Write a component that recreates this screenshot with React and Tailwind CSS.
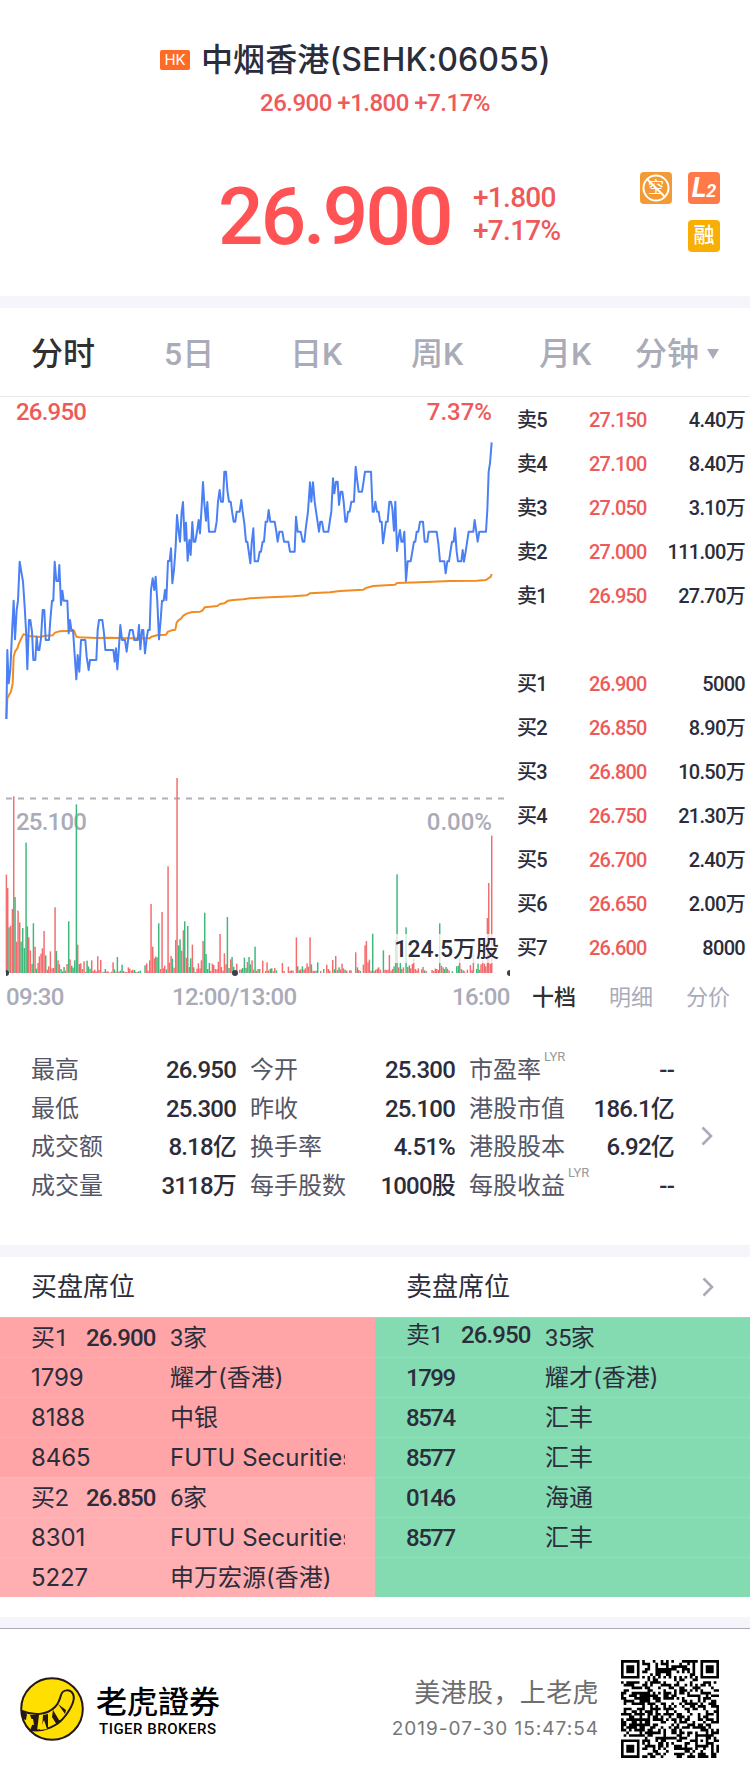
import clsx from 'clsx';

const tabs = [
    { label: '分时', pad: 'w-[164px] pl-[31px]' },
    { label: '5日', pad: 'w-[126px]' },
    { label: '日K', pad: 'w-[121px]' },
    { label: '周K', pad: 'w-[128px]' },
    { label: '月K', pad: 'w-[96px]' },
];

const asks = [
    ['卖5', '27.150', '4.40万'],
    ['卖4', '27.100', '8.40万'],
    ['卖3', '27.050', '3.10万'],
    ['卖2', '27.000', '111.00万'],
    ['卖1', '26.950', '27.70万'],
];

const bids = [
    ['买1', '26.900', '5000'],
    ['买2', '26.850', '8.90万'],
    ['买3', '26.800', '10.50万'],
    ['买4', '26.750', '21.30万'],
    ['买5', '26.700', '2.40万'],
    ['买6', '26.650', '2.00万'],
    ['买7', '26.600', '8000'],
];

const stats = [
    [['最高', '26.950'], ['最低', '25.300'], ['成交额', '8.18亿'], ['成交量', '3118万']],
    [['今开', '25.300'], ['昨收', '25.100'], ['换手率', '4.51%'], ['每手股数', '1000股']],
    [['市盈率', '--', 'LYR'], ['港股市值', '186.1亿'], ['港股股本', '6.92亿'], ['每股收益', '--', 'LYR']],
];

const buySeats = [
    { level: '买1', price: '26.900', count: '3家' },
    { code: '1799', name: '耀才(香港)' },
    { code: '8188', name: '中银' },
    { code: '8465', name: 'FUTU Securities' },
    { level: '买2', price: '26.850', count: '6家', light: true },
    { code: '8301', name: 'FUTU Securities', light: true },
    { code: '5227', name: '申万宏源(香港)', light: true },
];

const sellSeats = [
    { level: '卖1', price: '26.950', count: '35家' },
    { code: '1799', name: '耀才(香港)' },
    { code: '8574', name: '汇丰' },
    { code: '8577', name: '汇丰' },
    { code: '0146', name: '海通' },
    { code: '8577', name: '汇丰' },
    {},
];

// Chart series are kept at three units per pixel
const priceMorning =
    '19,957 22,750 26,850 31,810 36,700 41,602 45,718 50,630 54,602 59,485 63,510 69,545 74,620 78,690 82,808 87,660 91,660 96,695 100,780 106,780 110,710 114,750 118,750 123,715 128,630 133,630 137,720 147,720 151,660 156,602 160,602 164,485 169,543 175,543 178,495 183,615 187,572 191,602 202,602 206,700 210,660 214,690 219,690 224,765 229,838 233,765 238,815 243,720 256,720 260,770 266,810 270,780 289,780 293,690 297,660 307,660 312,700 316,750 340,750 344,785 348,745 352,808 357,740 361,675 366,720 375,720 380,755 385,715 390,690 398,690 403,720 413,720 417,675 421,748 426,690 430,690 435,760 440,715 444,690 449,690 453,570 458,535 463,570 467,530 472,605 477,718 482,660 486,602 491,602 495,570 499,600 504,483 509,483 513,445 517,550 522,510 527,440 531,345 536,395 540,425 545,335 549,306 554,422 558,368 563,482 568,420 572,465 577,366 581,425 586,425 591,395 596,360 600,400 605,320 609,246 613,310 618,362 622,306 627,395 645,395 650,365 654,305 659,270 663,305 669,305 673,215 678,215 682,270 687,305 692,305 697,340 701,365 706,365 710,335 719,335 724,300 728,335 733,370 738,425 742,425 747,460 751,490';
const priceAfternoon =
    '5,430 10,385 14,484 24,484 29,455 33,455 38,425 42,425 47,365 52,365 56,330 61,365 74,365 79,395 83,425 88,395 97,395 102,425 115,425 120,455 134,455 138,350 143,395 152,395 158,425 163,425 168,380 174,335 180,247 184,305 189,247 194,305 199,340 207,395 211,365 216,365 221,395 235,395 240,360 244,335 249,235 253,280 258,245 263,245 267,315 272,275 277,275 281,305 286,365 290,365 294,335 299,335 304,305 312,305 317,200 321,235 326,275 336,275 340,250 345,215 363,215 368,335 372,335 376,305 381,335 386,335 390,365 395,365 399,430 404,395 408,365 413,365 418,305 423,305 427,325 432,392 436,305 441,453 446,410 450,390 454,425 459,425 463,395 468,543 473,484 482,484 487,455 492,425 496,425 500,395 505,395 510,365 519,365 524,425 532,425 536,395 560,395 565,430 570,484 583,484 587,520 592,484 597,484 602,450 606,425 611,425 615,385 620,455 624,484 634,484 638,450 642,485 647,455 656,395 670,395 674,360 679,395 683,425 688,395 708,395 712,330 716,215 720,190 725,127';
const average =
    '19,957 22,895 27,885 33,875 38,850 41,770 45,755 52,745 57,730 64,715 70,703 77,704 85,708 125,711 130,708 158,706 165,698 178,694 222,692 229,710 237,712 290,714 330,713 380,715 448,715 455,710 470,706 498,704 504,695 515,691 526,689 530,668 535,661 543,656 550,647 560,641 577,636 600,635 607,632 614,622 630,620 652,618 660,612 673,610 684,602 700,600 730,598 750,595 779,593 810,592 880,589 920,586 930,580 990,577 1020,573 1090,569 1100,563 1120,558 1185,554 1191,549 1260,547 1350,543 1430,542 1458,540 1468,533 1472,531 1475,522';

const tail = priceAfternoon
    .split(' ')
    .map((p) => {
        const [x, y] = p.split(',').map(Number);
        return `${x + 750},${y}`;
    })
    .join(' ');
const price = `${priceMorning} ${tail}`;

// Volume: x, bar height, g = down tick / r = up tick
const volume =
    '19,295,r 23,255,r 27,137,g 32,142,r 37,192,r 41,530,r 45,228,g 50,94,r 54,187,r 59,152,r 63,94,g 68,135,g 73,75,g 78,391,g 82,140,g 86,107,r 91,68,r 96,27,g 100,149,g 105,79,r 109,13,g 114,30,r 118,50,r 123,58,r 127,74,r 132,126,r 137,53,g 142,10,r 146,20,r 151,65,r 156,14,r 161,15,r 165,197,r 169,66,g 174,38,r 178,26,r 183,12,g 188,5,g 192,18,g 196,7,r 201,27,r 206,155,g 210,41,r 215,22,g 219,16,g 224,38,g 229,506,g 233,85,r 238,27,g 242,29,r 247,12,r 252,35,r 257,3,r 261,37,g 265,20,g 270,13,g 275,38,r 279,6,r 284,10,r 288,5,r 293,50,r 297,9,r 302,39,r 307,2,g 312,4,r 316,12,g 321,5,r 325,4,r 334,4,r 339,32,r 343,11,g 348,4,r 352,48,g 357,4,r 361,7,g 366,25,g 370,6,r 375,4,r 380,3,r 385,17,r 389,13,r 394,7,r 398,10,r 403,9,g 407,4,r 412,3,r 416,5,g 421,7,g 435,23,g 440,29,r 444,7,r 449,38,r 453,207,r 458,79,r 463,44,r 467,49,r 471,47,g 476,149,g 481,12,r 486,183,r 490,14,r 494,22,r 499,11,g 504,320,r 508,31,r 513,51,r 517,43,g 522,16,r 527,99,r 531,585,r 536,83,g 540,101,g 545,67,r 550,128,r 554,155,g 559,46,r 563,141,g 568,18,r 572,44,g 577,85,r 581,17,g 586,3,g 591,13,r 595,29,r 600,14,r 604,38,r 609,96,r 614,181,g 618,57,g 623,12,g 628,30,g 632,6,r 637,28,r 641,24,r 646,12,r 651,11,r 655,34,r 660,117,r 664,18,r 669,7,r 673,59,r 678,26,r 682,168,g 687,15,g 692,41,r 696,48,g 701,19,g 705,4,r 710,28,r 719,10,r 724,11,r 728,15,g 733,46,g 738,15,g 742,33,r 747,48,g 751,26,g 756,38,r 760,10,r 765,79,g 769,7,r 774,12,g 779,12,r 788,37,r 797,6,r 801,32,r 806,8,r 811,13,g 815,14,g 820,5,r 824,15,r 829,8,g 847,30,r 852,6,r 865,19,r 870,6,r 874,8,r 879,7,r 889,107,r 893,20,g 898,8,g 902,11,r 907,20,g 912,10,r 916,14,r 921,29,r 925,19,r 930,107,r 934,26,g 939,7,r 943,6,r 948,7,g 953,32,g 962,6,r 971,12,g 980,25,r 985,12,r 989,7,r 998,39,r 1003,11,g 1007,51,r 1012,9,r 1017,17,g 1021,11,r 1026,28,r 1030,14,r 1035,10,g 1040,7,r 1049,8,r 1053,8,r 1067,62,r 1072,17,g 1076,9,r 1081,6,g 1090,25,r 1095,83,r 1099,96,r 1104,32,r 1108,40,r 1113,7,r 1118,118,g 1122,6,r 1127,10,r 1132,13,r 1136,17,r 1141,10,r 1150,68,g 1155,10,r 1159,9,r 1164,10,r 1168,54,r 1173,7,r 1178,12,r 1182,20,g 1187,99,r 1191,296,g 1196,17,r 1201,30,g 1205,12,r 1210,17,r 1218,137,g 1223,18,r 1228,23,g 1232,14,r 1237,27,r 1241,44,r 1246,12,r 1251,8,r 1255,14,r 1265,11,r 1269,18,r 1274,8,g 1279,5,r 1296,9,r 1301,6,r 1306,13,r 1310,12,r 1315,9,r 1319,149,g 1324,22,r 1329,17,r 1333,12,g 1338,18,g 1342,13,r 1347,8,r 1357,5,g 1370,20,g 1375,22,g 1379,44,r 1384,12,r 1389,8,g 1393,5,r 1402,10,r 1411,24,r 1416,8,r 1420,55,r 1430,12,g 1434,28,g 1439,10,r 1443,26,r 1448,38,r 1453,28,r 1457,20,r 1462,165,r 1466,270,r 1471,27,r 1475,412,r'
        .split(' ')
        .map((v) => v.split(','));

const Chart = () => (
    <div className="relative w-[510px] h-[583px] shrink-0">
        <svg viewBox="0 0 510 583" className="block w-[510px] h-[583px]">
            <path d="M6 401.5H507" stroke="#aeb0bc" strokeWidth="2" strokeDasharray="6 6" />
            <g transform="translate(0 3) scale(.33333)" fill="none" strokeWidth="6" strokeLinejoin="round">
                <polyline points={average} stroke="#f08c22" />
                <polyline points={price} stroke="#4b80f4" />
            </g>
        </svg>
        <ChartText className="left-4 top-[3px] tracking-[-0.8px] text-[#ee5a5a]">26.950</ChartText>
        <ChartText className="right-[18px] top-[3px] text-[#ee5a5a]">7.37%</ChartText>
        <ChartText className="left-4 top-[413px] tracking-[-0.8px] text-[#a9abb8]">25.100</ChartText>
        <ChartText className="right-[18px] top-[413px] text-[#a9abb8]">0.00%</ChartText>
        <svg viewBox="0 0 510 583" className="absolute inset-0 w-[510px] h-[583px]">
            <g transform="translate(0 576) scale(.33333)">
                {volume.map(([x, h, c], i) => (
                    <rect key={i} x={x - 2} y={-h} width="4.4" height={h} fill={c === 'g' ? '#3fb87a' : '#f36c6e'} />
                ))}
            </g>
            <path d="M6 573a3 3 0 0 1 0 6z" fill="#3d3e4a" />
            <circle cx="235" cy="576" r="3" fill="#3d3e4a" />
            <path d="M510 573a3 3 0 0 0 0 6z" fill="#3d3e4a" />
        </svg>
        <div className="absolute right-[11px] top-[537px] h-[29px] bg-white/75 text-[23px] leading-[32px] font-medium whitespace-nowrap">
            124.5万股
        </div>
    </div>
);

const ChartText = ({ className, children }) => (
    <div className={clsx('absolute text-2xl leading-6 font-medium', className)}>{children}</div>
);

const BookRow = ({ row: [label, value, amount] }) => (
    <div className="flex h-11 items-center text-[20px] font-medium text-[#2c2d3b]">
        <span className="w-[72px] tracking-[-0.8px]">{label}</span>
        <span className="text-[#ee5a5a] tracking-[-0.8px]">{value}</span>
        <span className="ml-auto tracking-[-0.7px]">{amount}</span>
    </div>
);

const Chevron = () => (
    <svg viewBox="0 0 12 20" className="w-3 h-5 shrink-0" fill="none" stroke="#a9abb8" strokeWidth="2.6">
        <path d="M1.5 1.5L10 10L1.5 18.5" />
    </svg>
);

const SeatRow = ({ seat, side }) => (
    <div
        className={clsx(
            'flex h-10 items-center border-t pl-[31px] text-2xl text-[#2c2d3b]',
            side === 'sell' && 'bg-[#84dbb1] border-[#93dfba]',
            side === 'buy' && !seat.light && 'bg-[#ffa5a8] border-[#ffadb0]',
            side === 'buy' && seat.light && 'bg-[#ffaeb1] border-[#ffb6b8]'
        )}
    >
        {seat.level && (
            <>
                <span className={clsx('flex w-[139px] font-medium', side === 'sell' && 'pb-[5px]')}>
                    <span className="w-[55px] font-normal">{seat.level}</span>
                    <span className="tracking-[-0.9px]">{seat.price}</span>
                </span>
                <span className="tracking-[-0.6px]">{seat.count}</span>
            </>
        )}
        {seat.code && (
            <>
                <span className={clsx('w-[139px]', side === 'sell' ? 'font-medium tracking-[-1.5px]' : "font-['Inter'] tracking-[-0.1px]")}>
                    {seat.code}
                </span>
                <span className="w-[175px] overflow-hidden whitespace-nowrap font-['Inter','Noto_Sans_CJK_SC',sans-serif]">
                    {seat.name}
                </span>
            </>
        )}
    </div>
);

const QR_SIZE = 37;

const isDark = (x, y) => {
    const far = QR_SIZE - 7;
    for (const [fx, fy] of [[0, 0], [far, 0], [0, far]]) {
        const d = Math.max(Math.abs(x - fx - 3), Math.abs(y - fy - 3));
        if (d <= 4) return d !== 4 && d !== 2;
    }
    const a = Math.max(Math.abs(x - 30), Math.abs(y - 30));
    if (a <= 2) return a !== 1;
    if (x === 6 || y === 6) return (x + y) % 2 === 0;
    const n = Math.sin(x * 12.9898 + y * 78.233) * 43758.5453;
    return n - Math.floor(n) < 0.53;
};

const QrCode = () => {
    let d = '';
    for (let y = 0; y < QR_SIZE; y++) {
        for (let x = 0; x < QR_SIZE; x++) {
            if (isDark(x, y)) d += `M${x} ${y}h1v1h-1z`;
        }
    }
    return (
        <svg viewBox="0 0 37 37" className="w-[98px] h-[98px]">
            <path d={d} />
        </svg>
    );
};

const TigerLogo = () => (
    <svg viewBox="0 0 64 64" className="w-16 h-16">
        <circle cx="32" cy="32" r="30.8" fill="#ffdf00" stroke="#231815" strokeWidth="2" />
        <path
            d="M2 34C14 39 27 38 35 30C39 26 40 22 41 18C43 12 50 12 53 17C56 23 51 31 46 38C38 49 25 55 11 53"
            fill="none"
            stroke="#231815"
            strokeWidth="2"
        />
        <path d="M1 33L7 37L6 43L3 42z M10 38L19 38L17 54L10 53L13 46z M23 38L28 37L28 52L22 53z M33 33L39 43L42 44L37 48L32 40z M38 27L46 33L45 37z" fill="#231815" />
        <path d="M24 43L27 52L20 53z M8 42L13 42L14 48L9 47z" fill="#ffdf00" />
    </svg>
);

export default function App() {
    return (
        <div className="w-[750px] h-[1789px] overflow-hidden bg-white text-[#2c2d3b] font-['Roboto','Noto_Sans_CJK_SC',sans-serif]">
            {/* Quote header */}
            <header className="h-[296px] pt-[38px]">
                <div className="flex items-center h-11 pl-[160px] gap-[11px]">
                    <span className="flex w-[30px] h-5 items-center justify-center rounded-[2px] bg-[#ff6a26] text-white font-['Inter'] text-[15px]">HK</span>
                    <h1 className="text-[32px] leading-[44px] font-medium whitespace-nowrap font-['Inter','Noto_Sans_CJK_SC',sans-serif] tracking-[0.1px]">
                        中烟香港(SEHK:06055)
                    </h1>
                </div>
                <p className="mt-[6px] pl-[260px] text-2xl leading-[30px] font-medium tracking-[-0.5px] text-[#ee5a5a] whitespace-nowrap">
                    26.900 +1.800 +7.17%
                </p>
                <div className="flex mt-[54px]">
                    <div className="pl-[218px] w-[473px] text-[80px] leading-[90px] font-medium tracking-[-2.8px] text-[#ff5254]">26.900</div>
                    <div className="w-[167px] pt-[9px] text-[28px] leading-[33px] font-medium tracking-[-0.7px] text-[#ee5a5a]">
                        <p>+1.800</p>
                        <p>+7.17%</p>
                    </div>
                    <div className="grid grid-cols-2 gap-4 w-20 h-20">
                        <span className="relative flex w-8 h-8 items-center justify-center rounded bg-[#f39a35] text-white text-base">
                            空
                            <svg viewBox="0 0 32 32" className="absolute inset-0" fill="none" stroke="#fff" strokeWidth="2">
                                <circle cx="16" cy="16" r="12.5" />
                                <path d="M7 7L25 25" />
                            </svg>
                        </span>
                        <span className="flex w-8 h-8 items-baseline justify-center rounded bg-[#ff7a48] text-white italic font-bold text-[28px] leading-8">
                            L<span className="text-[18px]">2</span>
                        </span>
                        <span className="col-start-2 flex w-8 h-8 items-center justify-center rounded bg-[#f9ae02] text-white text-[21px] font-medium">融</span>
                    </div>
                </div>
            </header>

            <div className="h-3 bg-[#f5f5fb]" />

            {/* Period tabs */}
            <nav className="flex h-[89px] items-center border-b border-[#e8e8ec] pt-[3px] text-[32px] font-medium text-[#a9abb8]">
                {tabs.map((tab, i) => (
                    <span key={tab.label} className={clsx(tab.pad, i === 0 && 'text-[#303030]')}>
                        {tab.label}
                    </span>
                ))}
                <span className="flex items-center gap-[8px]">
                    分钟
                    <svg viewBox="0 0 12 10" className="w-3 h-[10px]">
                        <path d="M0 0H12L6 10z" fill="#a9abb8" />
                    </svg>
                </span>
            </nav>

            <div className="flex h-[583px]">
                <Chart />
                <div className="flex-1 pt-[1px] pl-[7px] pr-[5px]">
                    {asks.map((row) => <BookRow key={row[0]} row={row} />)}
                    <div className="h-11" />
                    {bids.map((row) => <BookRow key={row[0]} row={row} />)}
                </div>
            </div>

            <div className="flex h-[58px] text-2xl leading-[34px] font-medium text-[#a9abb8]">
                <div className="flex w-[510px] pl-[6px] tracking-[-0.6px]">
                    <span className="w-[166px]">09:30</span>
                    <span className="w-[280px]">12:00/13:00</span>
                    <span>16:00</span>
                </div>
                <div className="flex flex-1 pl-[22px] gap-[33px] text-[22px] leading-[35px] font-normal">
                    <span className="font-medium text-[#303030]">十档</span>
                    <span>明细</span>
                    <span>分价</span>
                </div>
            </div>

            {/* Key stats */}
            <section className="flex h-[207px] pt-[13px] pl-[31px]">
                <div className="flex gap-[14px]">
                    {stats.map((col, i) => (
                        <div key={i} className="w-[205px]">
                            {col.map(([label, value, sup]) => (
                                <div key={label} className="flex h-[38.6px] items-center justify-between text-2xl whitespace-nowrap">
                                    <span className="flex text-[#555666]">
                                        {label}
                                        {sup && <span className="-mt-[3px] ml-[3px] text-[13px] leading-3 text-[#999]">{sup}</span>}
                                    </span>
                                    <span className="font-medium tracking-[-0.8px]">{value}</span>
                                </div>
                            ))}
                        </div>
                    ))}
                </div>
                <div className="pl-[27px] pt-[75px]">
                    <Chevron />
                </div>
            </section>

            <div className="h-3 bg-[#f5f5fb]" />

            {/* Broker seats */}
            <section>
                <div className="flex h-[60px] items-center pl-[31px] pr-9 text-[26px]">
                    <span className="w-[375px]">买盘席位</span>
                    <span className="flex-1">卖盘席位</span>
                    <Chevron />
                </div>
                <div className="grid grid-cols-2">
                    <div>{buySeats.map((seat, i) => <SeatRow key={i} seat={seat} side="buy" />)}</div>
                    <div>{sellSeats.map((seat, i) => <SeatRow key={i} seat={seat} side="sell" />)}</div>
                </div>
            </section>

            <div className="mt-5 h-3 border-b border-[#a9abb8] bg-[#f5f5fb]" />

            <footer className="flex items-center h-[160px] pl-5 pr-[31px]">
                <TigerLogo />
                <div className="ml-3 text-black">
                    <p className="text-[31px] leading-9 font-medium font-['Noto_Sans_CJK_TC',sans-serif]">老虎證券</p>
                    <p className="mt-[3px] pl-[3px] text-[15px] leading-4 font-medium tracking-[0.5px]">TIGER BROKERS</p>
                </div>
                <div className="ml-auto mr-[22px] text-right text-[#6e6e6e]">
                    <p className="text-[26px] leading-9 tracking-[0.4px]">美港股，上老虎</p>
                    <p className="mt-1 text-[19px] leading-7 tracking-[1px] text-[#777] font-['Inter']">2019-07-30 15:47:54</p>
                </div>
                <QrCode />
            </footer>
        </div>
    );
}
